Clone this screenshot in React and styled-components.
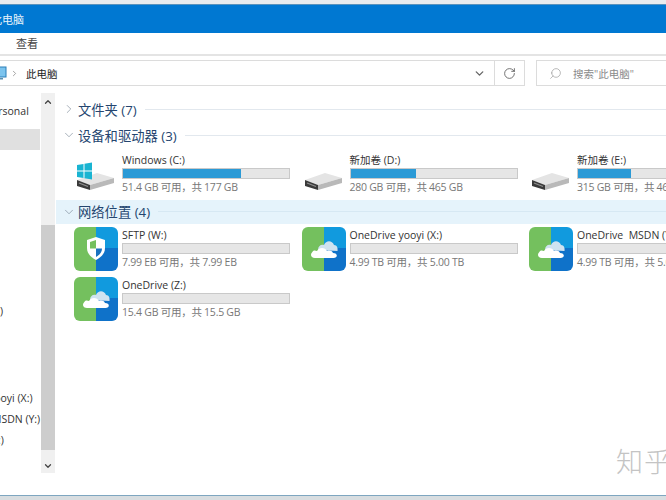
import React from "react";
import styled, { createGlobalStyle } from "styled-components";
import { ChevronDown, ChevronRight, ChevronUp, RotateCw, Search } from "lucide-react";

const FONT = `"Open Sans", "Noto Sans", "Noto Sans CJK SC", sans-serif`;

const drives = [
  { name: "Windows (C:)", size: "51.4 GB 可用，共 177 GB", used: 71, system: true },
  { name: "新加卷 (D:)", size: "280 GB 可用，共 465 GB", used: 39.5 },
  { name: "新加卷 (E:)", size: "315 GB 可用，共 465 GB", used: 32 },
];

const network = [
  { name: "SFTP (W:)", size: "7.99 EB 可用，共 7.99 EB", shield: true },
  { name: "OneDrive yooyi (X:)", size: "4.99 TB 可用，共 5.00 TB" },
  { name: "OneDrive  MSDN (Y:)", size: "4.99 TB 可用，共 5.00 TB" },
  { name: "OneDrive (Z:)", size: "15.4 GB 可用，共 15.5 GB" },
];

const DriveIcon = ({ system }) => (
  <svg width="48" height="44" viewBox="0 0 48 44">
    <g transform="translate(0 1)">
      <path d="M3 27 L23 20 L40 25 L16 32 Z" fill="#e4e4e4" />
      <path d="M16 32 L40 25 L40 30 L16 37 Z" fill="#b9b9b9" />
      <path d="M3 27 L16 32 L16 37 L3 33 Z" fill="#3a3a3a" />
      <path d="M5 30 L14 33.5" stroke="#8f8f8f" strokeWidth="1.2" />
      {system && (
        <g fill="#19b4d2">
          <path d="M3 12 L9.5 11 L9.5 17.5 L3 17.5 Z" />
          <path d="M10.5 10.8 L18 9.6 L18 17.5 L10.5 17.5 Z" />
          <path d="M3 18.5 L9.5 18.5 L9.5 25 L3 24 Z" />
          <path d="M10.5 18.5 L18 18.5 L18 26.4 L10.5 25.2 Z" />
        </g>
      )}
    </g>
  </svg>
);

const NetworkIcon = ({ shield }) => (
  <svg width="44" height="44" viewBox="0 0 44 44">
    <defs>
      <clipPath id="tileClip">
        <rect width="44" height="44" rx="6" />
      </clipPath>
    </defs>
    <g clipPath="url(#tileClip)">
      <rect width="22" height="44" fill="#74c05e" />
      <rect x="22" width="22" height="22" fill="#119ade" />
      <rect x="22" y="21" width="22" height="23" fill="#0f72c9" />
    </g>
    {shield ? (
      <g>
        <path d="M22 10 L31 13 L31 21 C31 27 27 30 22 33 C17 30 13 27 13 21 L13 13 Z" fill="#fff" />
        <path d="M22 13 L16 15 L16 21.5 L22 21.5 Z" fill="#74c05e" />
        <path d="M22 21.5 L28 21.5 C28 25.5 25.5 28 22 30 Z" fill="#1a72c0" />
      </g>
    ) : (
      <g>
        <path
          d="M16 23 C16 19 19 17 22 18 C24 13 30 13 32 18 C35 18 36 21 35.5 24 Z"
          fill="#cfe3f0"
        />
        <path
          d="M13 31 C9 31 8 27.5 10 25.5 C11 23 13 23 15 24 C17 20 23 20 25 24 C27 23 30 23.5 31 26 C36 26 36 31 31.5 31 Z"
          fill="#fff"
        />
      </g>
    )}
  </svg>
);

const PcIcon = () => (
  <svg width="16" height="16" viewBox="0 0 16 16">
    <rect x="1" y="2" width="14" height="10" fill="#7cc4ee" stroke="#2a7fb8" />
    <rect x="4" y="13" width="8" height="1.5" fill="#5a8fb0" />
  </svg>
);

const Tile = ({ icon, name, size, used }) => (
  <TileWrap>
    <TileIcon>{icon}</TileIcon>
    <TileBody>
      <TileName>{name}</TileName>
      <Bar>
        <BarFill style={{ width: `${used || 0}%` }} />
      </Bar>
      <TileSize>{size}</TileSize>
    </TileBody>
  </TileWrap>
);

const Group = ({ title, open, highlight }) => (
  <GroupHeader $highlight={highlight}>
    <GroupArrow>
      {open ? <ChevronDown size={14} strokeWidth={1} /> : <ChevronRight size={14} strokeWidth={1} />}
    </GroupArrow>
    <GroupTitle>{title}</GroupTitle>
    <GroupLine $highlight={highlight} />
  </GroupHeader>
);

export default function App() {
  return (
    <>
      <GlobalStyle />
      <Screen>
        <TopEdge />
        <TitleBar>
          <TitleText>此电脑</TitleText>
        </TitleBar>
        <Ribbon>
          <RibbonTab>查看</RibbonTab>
        </Ribbon>
        <AddressRow>
          <AddressBox>
            <Crumbs>
              <PcIcon />
              <ChevronRight size={9} color="#888" />
              <Crumb>此电脑</Crumb>
            </Crumbs>
            <AddressBtn>
              <ChevronDown size={13} color="#666" strokeWidth={2.5} />
            </AddressBtn>
            <AddressBtn $bordered>
              <RotateCw size={13} color="#555" strokeWidth={1.5} />
            </AddressBtn>
          </AddressBox>
          <SearchBox>
            <Search size={13} color="#999" strokeWidth={1.25} style={{ transform: "scaleX(-1)" }} />
            <SearchText>搜索"此电脑"</SearchText>
          </SearchBox>
        </AddressRow>
        <Body>
          <Sidebar>
            <NavList>
              <NavItem $indent={-69}>OneDrive - Personal</NavItem>
              <NavItem $active />
              <NavGap $height={150} />
              <NavItem $indent={-46}>新加卷 (E:)</NavItem>
              <NavGap $height={66} />
              <NavItem $indent={-60}>OneDrive yooyi (X:)</NavItem>
              <NavItem $indent={-57}>OneDrive MSDN (Y:)</NavItem>
              <NavItem $indent={-60}>OneDrive (Z:)</NavItem>
            </NavList>
            <Scrollbar>
              <ScrollBtn>
                <ChevronUp size={10} strokeWidth={3} color="#444" />
              </ScrollBtn>
              <ScrollTrack>
                <ScrollThumb />
              </ScrollTrack>
              <ScrollBtn $bottom>
                <ChevronDown size={10} strokeWidth={3} color="#444" />
              </ScrollBtn>
            </Scrollbar>
          </Sidebar>
          <Content>
            <Group title="文件夹 (7)" />
            <Group title="设备和驱动器 (3)" open />
            <TileGrid>
              {drives.map((d) => (
                <Tile
                  key={d.name}
                  icon={<DriveIcon system={d.system} />}
                  name={d.name}
                  size={d.size}
                  used={d.used}
                />
              ))}
            </TileGrid>
            <Group title="网络位置 (4)" open highlight />
            <TileGrid $net>
              {network.map((d) => (
                <Tile key={d.name} icon={<NetworkIcon shield={d.shield} />} name={d.name} size={d.size} />
              ))}
            </TileGrid>
          </Content>
        </Body>
        <Watermark>知乎</Watermark>
        <BottomEdge />
      </Screen>
    </>
  );
}

const GlobalStyle = createGlobalStyle`
  html, body {
    margin: 0;
    padding: 0;
    background: #fff;
    overflow: hidden;
  }
`;

const Screen = styled.div`
  position: relative;
  width: 666px;
  height: 500px;
  overflow: hidden;
  display: flex;
  flex-direction: column;
  background: #fff;
  font-family: ${FONT};
  color: #333;
`;

const TopEdge = styled.div`
  height: 5px;
  background: #e8ecef;
  border-bottom: 1px solid #5a93bd;
  box-sizing: border-box;
`;

const TitleBar = styled.div`
  height: 28px;
  background: #0078d2;
  display: flex;
  align-items: center;
`;

const TitleText = styled.span`
  margin-left: -9px;
  color: #eaf4fb;
  font-size: 11px;
`;

const Ribbon = styled.div`
  height: 23px;
  box-sizing: border-box;
  display: flex;
  align-items: center;
  padding: 0 0 2px 16px;
  border-bottom: 2px solid #e4e4e4;
`;

const RibbonTab = styled.span`
  font-size: 11px;
  color: #444;
`;

const AddressRow = styled.div`
  height: 26px;
  margin-top: 4px;
  display: flex;
  gap: 11px;
`;

const AddressBox = styled.div`
  width: 525px;
  box-sizing: border-box;
  border: 1px solid #dcdcdc;
  border-left: none;
  display: flex;
  align-items: stretch;
`;

const Crumbs = styled.div`
  flex: 1;
  display: flex;
  align-items: center;
  gap: 3px;
  margin-left: -9px;
`;

const Crumb = styled.span`
  margin-left: 4px;
  font-size: 10.5px;
  color: #222;
`;

const AddressBtn = styled.div`
  width: 29px;
  display: flex;
  align-items: center;
  justify-content: center;
  border-left: ${(p) => (p.$bordered ? "1px solid #dcdcdc" : "none")};
`;

const SearchBox = styled.div`
  flex: 1;
  border: 1px solid #dcdcdc;
  border-right: none;
  display: flex;
  align-items: center;
  padding-left: 12px;
  gap: 11px;
`;

const SearchText = styled.span`
  font-size: 10.5px;
  color: #8a8a8a;
  white-space: nowrap;
`;

const Body = styled.div`
  flex: 1;
  display: flex;
  min-height: 0;
`;

const Sidebar = styled.div`
  width: 56px;
  flex: none;
  display: flex;
  padding-top: 7px;
  box-sizing: border-box;
`;

const NavList = styled.div`
  width: 40px;
  flex: none;
  display: flex;
  flex-direction: column;
  padding-top: 7px;
`;

const NavItem = styled.div`
  height: 21px;
  flex: none;
  display: flex;
  align-items: center;
  margin-left: ${(p) => p.$indent || 0}px;
  margin-top: ${(p) => (p.$active ? "8px" : "0")};
  white-space: nowrap;
  font-size: 10.5px;
  color: #333;
  background: ${(p) => (p.$active ? "#e0e0e0" : "transparent")};
`;

const NavGap = styled.div`
  height: ${(p) => p.$height}px;
  flex: none;
`;

const Scrollbar = styled.div`
  width: 14px;
  height: 380px;
  margin-left: 1px;
  display: flex;
  flex-direction: column;
  background: #f0f0f0;
`;

const ScrollBtn = styled.div`
  height: ${(p) => (p.$bottom ? "23px" : "17px")};
  flex: none;
  display: flex;
  align-items: ${(p) => (p.$bottom ? "flex-end" : "center")};
  justify-content: center;
  padding-bottom: ${(p) => (p.$bottom ? "2px" : "0")};
  box-sizing: border-box;
`;

const ScrollTrack = styled.div`
  flex: 1;
  display: flex;
  flex-direction: column;
  justify-content: flex-end;
`;

const ScrollThumb = styled.div`
  height: 225px;
  background: #cdcdcd;
`;

const Content = styled.div`
  flex: 1;
  min-width: 0;
  padding-top: 10px;
`;

const GroupHeader = styled.div`
  height: ${(p) => (p.$highlight ? "24px" : "26px")};
  margin-top: ${(p) => (p.$highlight ? "2px" : "0")};
  box-sizing: border-box;
  display: flex;
  align-items: center;
  padding: 0 0 ${(p) => (p.$highlight ? "1px" : "0")} 6px;
  background: ${(p) => (p.$highlight ? "#e5f3fb" : "transparent")};
`;

const GroupArrow = styled.span`
  width: 16px;
  display: flex;
  color: #6a7a8a;
`;

const GroupTitle = styled.span`
  font-size: 13.3px;
  color: #24456f;
  white-space: nowrap;
`;

const GroupLine = styled.span`
  flex: 1;
  height: 1px;
  margin-left: 8px;
  background: ${(p) => (p.$highlight ? "#d6e8f3" : "#e2e8ee")};
`;

const TileGrid = styled.div`
  display: grid;
  grid-template-columns: repeat(3, 227.5px);
  grid-auto-rows: 50px;
  padding-left: 18px;
  margin-top: ${(p) => (p.$net ? "-1px" : "0")};
`;

const TileWrap = styled.div`
  display: flex;
  align-items: center;
  min-width: 0;
`;

const TileIcon = styled.div`
  width: 48px;
  flex: none;
  display: flex;
  padding-top: 2px;
`;

const TileBody = styled.div`
  width: 168px;
  flex: none;
  display: flex;
  flex-direction: column;
`;

const TileName = styled.div`
  font-size: 10.5px;
  line-height: 16px;
  color: #333;
  white-space: pre;
`;

const Bar = styled.div`
  height: 11px;
  box-sizing: border-box;
  border: 1px solid #c9c9c9;
  background: #e6e6e6;
`;

const BarFill = styled.div`
  height: 100%;
  background: #2b9ad6;
`;

const TileSize = styled.div`
  font-size: 10.5px;
  line-height: 16px;
  letter-spacing: -0.25px;
  color: #777;
  white-space: nowrap;
`;

const Watermark = styled.div`
  position: absolute;
  left: 616px;
  top: 443px;
  font-size: 27px;
  line-height: 36px;
  letter-spacing: 1px;
  color: #c4c4c4;
  white-space: nowrap;
  font-family: "Noto Sans CJK SC", sans-serif;
  font-weight: 300;
`;

const BottomEdge = styled.div`
  position: absolute;
  left: 0;
  right: 0;
  bottom: 0;
  height: 5px;
  box-sizing: border-box;
  background: #d8dde0;
  border-top: 1px solid #7ea6c0;
`;
